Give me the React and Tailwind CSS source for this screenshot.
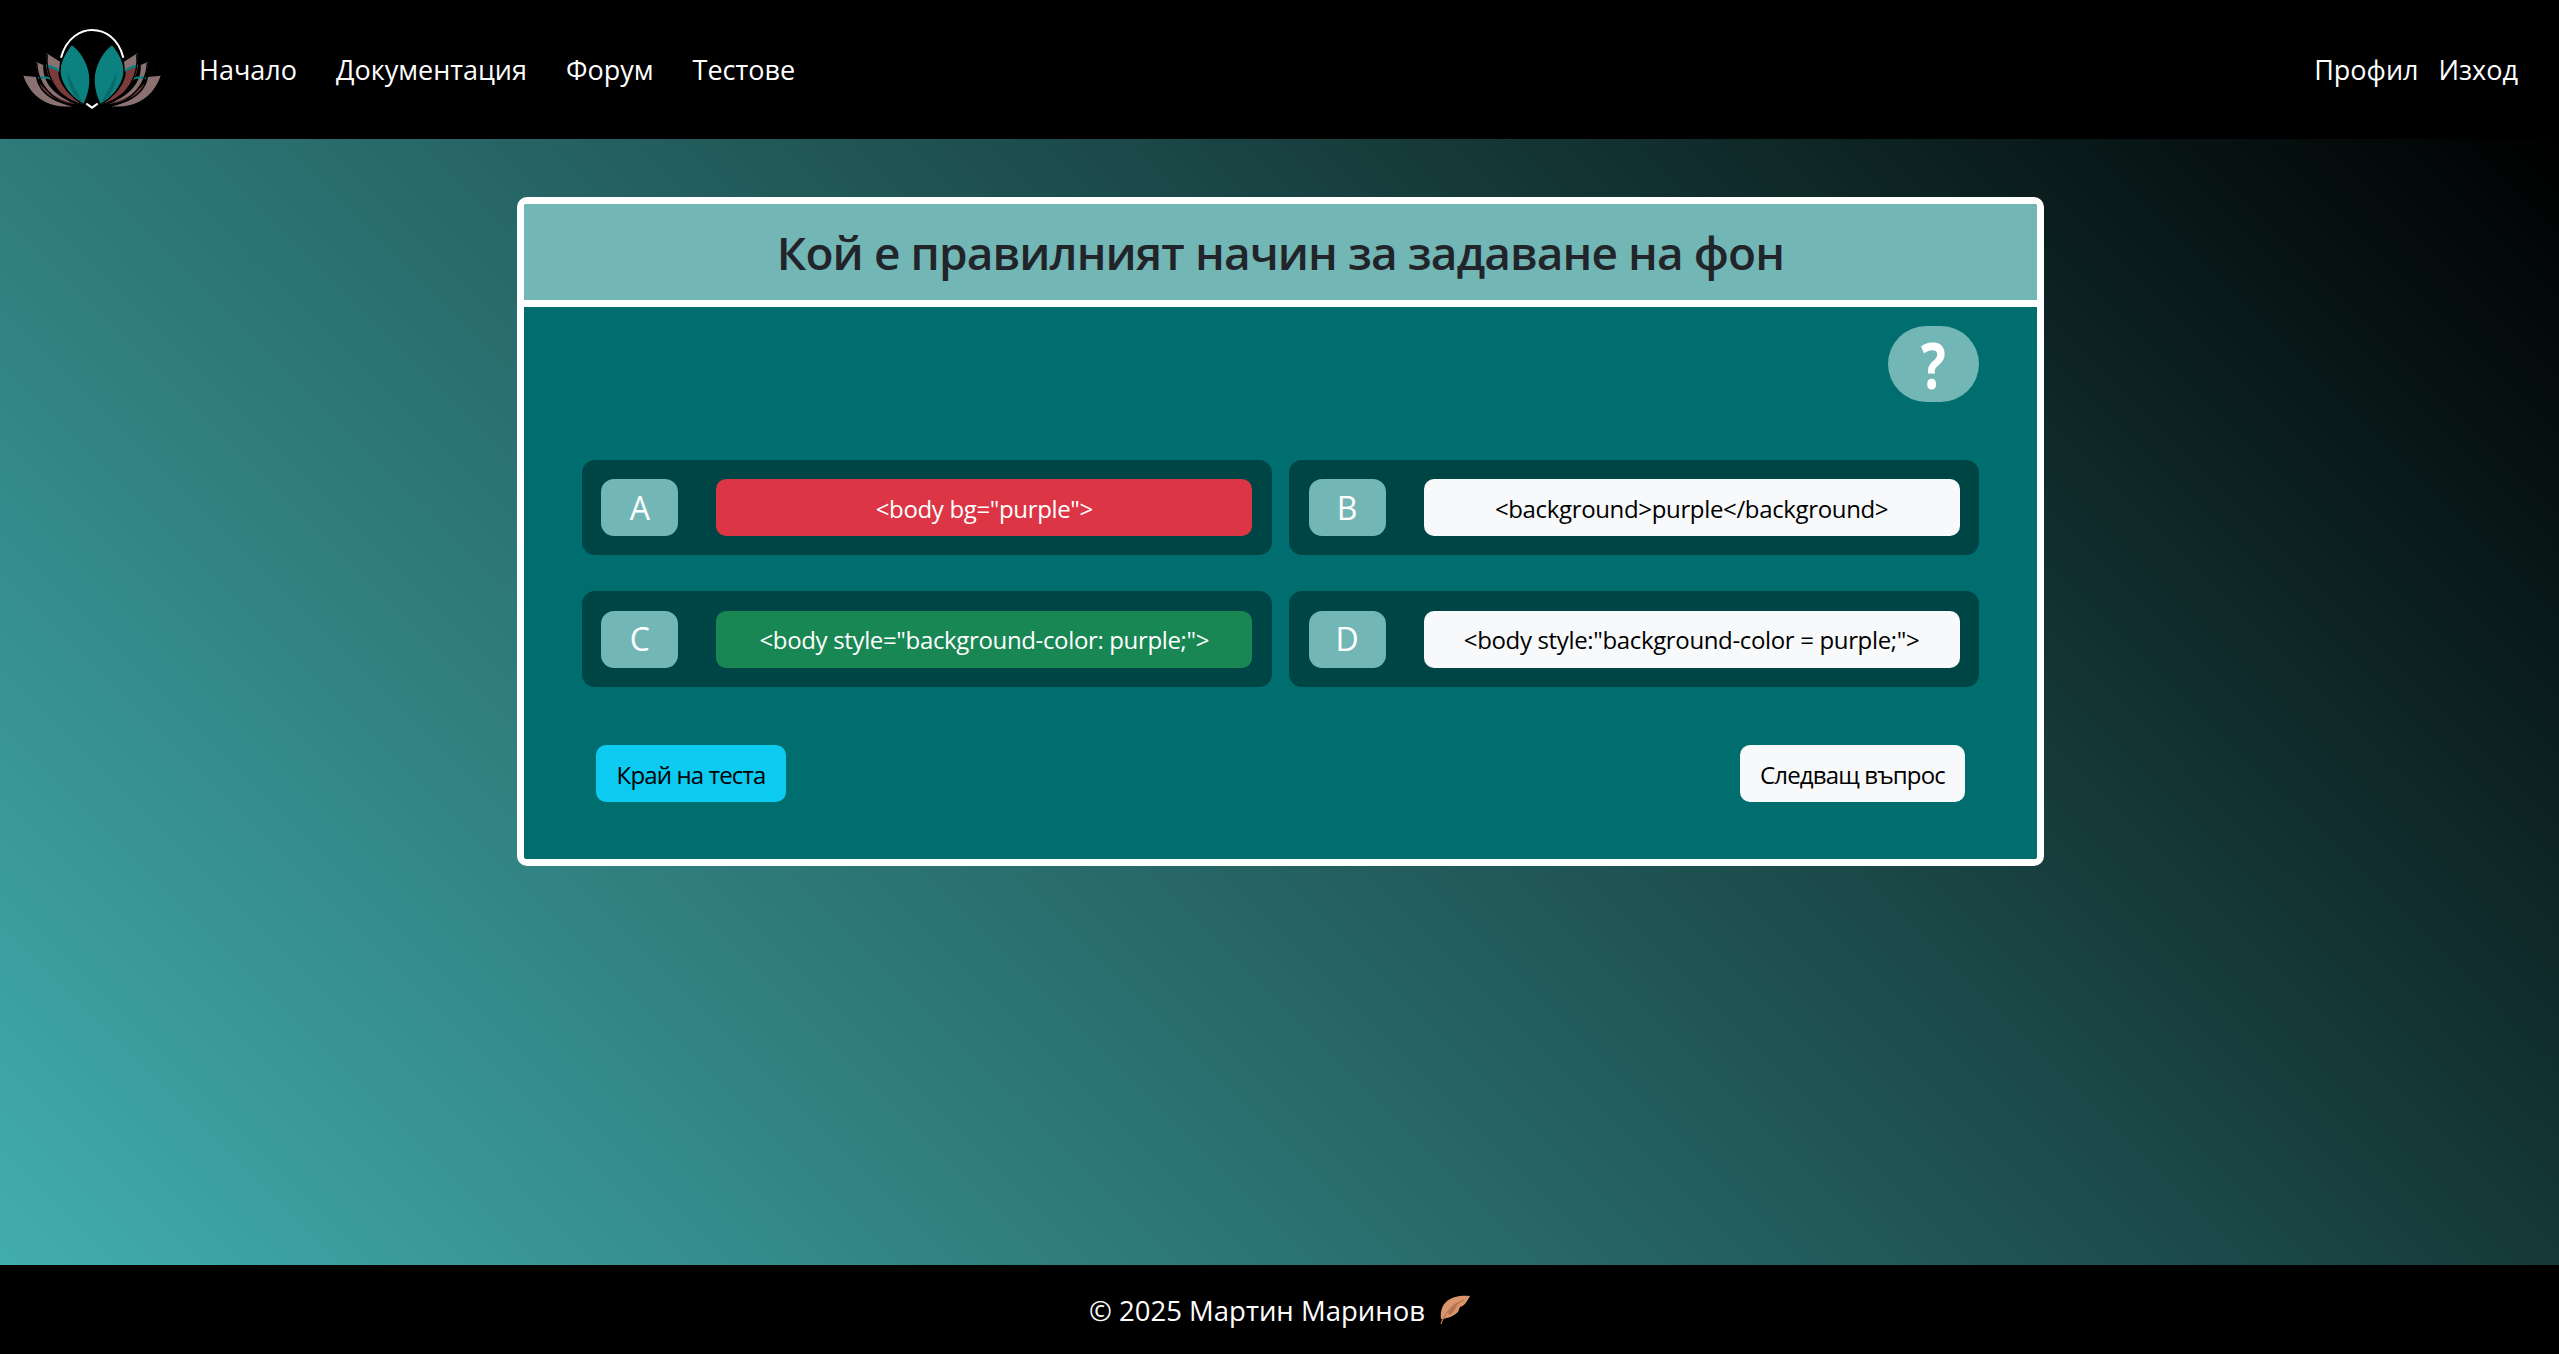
import React from 'react';

const font = 'font-["Open_Sans","Noto_Sans",sans-serif]';

const LotusHalf = () => (
  <g>
    <path d="M40 182 L78 186 C84 232 130 264 192 274 C125 280 66 255 40 182 Z" fill="#8a7272" />
    <path d="M78 141 L100 150 C96 205 140 250 205 268 C140 262 84 225 78 141 Z" fill="#8a7272" />
    <path d="M88 205 C110 230 150 258 205 268 C150 262 105 245 88 205 Z" fill="#6a3434" />
    <path d="M110 115 L150 140 C142 190 170 240 215 266 C160 250 105 200 110 115 Z" fill="#8a7272" />
    <path d="M108 150 L148 165 C148 200 175 240 215 266 C160 250 112 205 108 150 Z" fill="#7a3b3b" />
    <path d="M108 148 C120 150 135 155 148 164 L148 172 C135 163 120 158 108 156 Z" fill="#0f7f7f" />
    <path d="M84 186 C98 182 112 183 125 190 L128 197 C115 190 98 189 85 193 Z" fill="#0f7f7f" />
    <path d="M147 170 C148 205 180 245 222 268" fill="none" stroke="#000" strokeWidth="5" />
    <path d="M112 118 C104 180 140 245 205 270" fill="none" stroke="#000" strokeWidth="4" />
    <path d="M80 143 C82 205 125 258 192 274" fill="none" stroke="#000" strokeWidth="4" />
    <path d="M155 145 L165 170 L155 172 Z" fill="#c2504e" />
    <path d="M160 190 C175 215 195 235 212 255 C190 240 170 220 160 190 Z" fill="#b84a48" />
    <path d="M185 90 C160 120 150 150 152 175 C157 215 190 250 220 266 C234 240 240 210 237 180 C232 145 212 110 185 90 Z" fill="#0b827f" />
    <path d="M185 90 C160 120 148 150 149 175 C154 215 190 252 220 268" fill="none" stroke="#000" strokeWidth="3" />
    <path d="M172 170 C185 205 205 235 220 266 C195 250 172 215 172 170 Z" fill="#0a6c6c" />
  </g>
);

const Logo = () => (
  <svg viewBox="40 42 412 243" className="w-[138px] h-[81px] shrink-0">
    <path d="M153 128 C170 65 215 45 246 45 C285 45 325 70 340 128" fill="none" stroke="#fff" strokeWidth="6" />
    <LotusHalf />
    <g transform="translate(492 0) scale(-1 1)">
      <LotusHalf />
    </g>
    <path d="M229 266 L246 278 L263 266" fill="none" stroke="#fff" strokeWidth="6" />
  </svg>
);

const Feather = () => (
  <svg viewBox="0 0 30 30" className="w-[30px] h-[30px] ml-[15px]">
    <path d="M30 1 C22 0 13 1 7 6 C2 10 0 17 1 24 L3 24 C8 23 14 21 18 17 C19 15 19 14 20 12 C24 11 27 7 30 1 Z" fill="#d9966c" />
    <path d="M8 19 C9 14 13 9 18 7 C17 12 14 17 10 20 Z" fill="#b87550" />
    <path d="M1 29 C4 19 11 11 24 5" fill="none" stroke="#b9754e" strokeWidth="1.2" />
  </svg>
);

const answers = [
  { letter: 'A', text: '<body bg="purple">', cls: 'bg-[#dc3545] text-white' },
  { letter: 'B', text: '<background>purple</background>', cls: 'bg-[#f8f9fa] text-black' },
  { letter: 'C', text: '<body style="background-color: purple;">', cls: 'bg-[#198754] text-white' },
  { letter: 'D', text: '<body style:"background-color = purple;">', cls: 'bg-[#f8f9fa] text-black' }
];

const App = () => {
  return (
    <div className={`${font} min-h-screen flex flex-col text-white`}>
      <nav className="h-[139px] bg-black flex items-center pl-[23px] pr-[41px] text-[27px]">
        <Logo />
        <div className="flex gap-[39px] ml-[38px] pt-[2px]">
          <a href="#">Начало</a>
          <a href="#">Документация</a>
          <a href="#">Форум</a>
          <a href="#">Тестове</a>
        </div>
        <div className="flex gap-[20px] ml-auto pt-[2px]">
          <a href="#">Профил</a>
          <a href="#">Изход</a>
        </div>
      </nav>

      <main className="flex-1 bg-[linear-gradient(45deg,#42adad,#1c4a4a_60%,#000000)] pt-[58px]">
        <div className="w-[1527px] ml-[517px] border-[7px] border-white rounded-[10px] overflow-hidden">
          <div className="h-[96px] bg-[#72b6b6] flex items-center justify-center text-[#212529] text-[46px] font-semibold tracking-[-0.9px]">
            Кой е правилният начин за задаване на фон
          </div>
          <div className="border-t-[7px] border-white bg-[#006e6e] px-[58px] pt-[19px] pb-[57px]">
            <div className="flex justify-end">
              <button className="w-[91px] h-[76px] rounded-full bg-[#72b6b6] text-white text-[65px] font-bold leading-none">
                <span className="inline-block scale-x-[0.8]">?</span>
              </button>
            </div>
            <div className="grid grid-cols-2 grid-rows-[95px_96px] gap-x-[17.5px] gap-y-[36px] mt-[58px]">
              {answers.map((a) => (
                <div key={a.letter} className="bg-[#004545] rounded-[13px] flex items-center pl-[19.4px] pr-[19.5px] gap-[38px]">
                  <div className="w-[77px] h-[57px] rounded-[13px] bg-[#72b6b6] flex items-center justify-center text-[32px]">{a.letter}</div>
                  <div className={`flex-1 h-[57px] rounded-[10px] flex items-center justify-center text-[24px] tracking-[-0.35px] pt-[2px] ${a.cls}`}>{a.text}</div>
                </div>
              ))}
            </div>
            <div className="flex justify-between px-[14px] mt-[58px]">
              <button className="h-[57px] w-[190px] rounded-[10px] bg-[#0dcaf0] text-black text-[24px] tracking-[-0.85px] pt-[2px]">Край на теста</button>
              <button className="h-[57px] w-[225px] rounded-[10px] bg-[#f8f9fa] text-black text-[24px] tracking-[-0.85px] pt-[2px]">Следващ въпрос</button>
            </div>
          </div>
        </div>
      </main>

      <footer className="h-[89px] bg-black flex items-center justify-center text-[27.5px]">
        <span className="pt-[3px]">© 2025 Мартин Маринов</span>
        <Feather />
      </footer>
    </div>
  );
};

export default App;
